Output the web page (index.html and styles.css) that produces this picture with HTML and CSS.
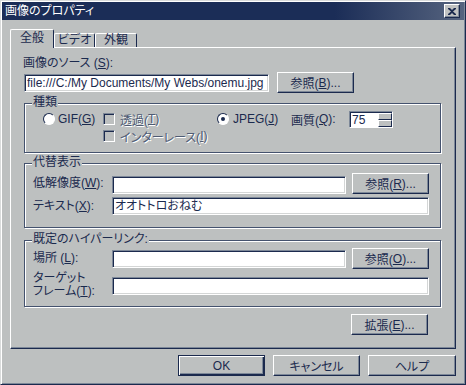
FILE: index.html
```html
<!DOCTYPE html>
<html>
  <head>
    <meta charset="utf-8">
    <link rel="stylesheet" href="styles.css">
  </head>
  <body>
    <div class="dialog">
      <div class="titlebar">
        <span class="title">画像のプロパティ</span>
        <span class="close">
          <svg width="8" height="7" viewBox="0 0 8 7">
            <path d="M0 0h2l2 2 2-2h2v1L5 3.5 8 6v1H6L4 5 2 7H0V6l3-2.5L0 1z" fill="#1b2a4e"/>
          </svg>
        </span>
      </div>

      <div class="tabs">
        <div class="tab active">全般</div>
        <div class="tab tab-video">ビデオ</div>
        <div class="tab tab-look">外観</div>
      </div>

      <div class="panel">
        <div class="lbl src-label">画像のソース (<u>S</u>):</div>
        <div class="src-row">
          <div class="field src-field">file:///C:/My Documents/My Webs/onemu.jpg</div>
          <div class="btn browse-b">参照(<u>B</u>)...</div>
        </div>

        <div class="group type-group">
          <span class="group-title">種類</span>
          <div class="type-row">
            <div class="opt col-gif"><span class="radio"></span>GIF(<u>G</u>)</div>
            <div class="opt col-trans disabled"><span class="check"></span>透過(<u>T</u>)</div>
            <div class="opt col-jpeg"><span class="radio on"></span>JPEG(<u>J</u>)</div>
            <div class="opt col-q">画質(<u>Q</u>):</div>
            <div class="spin">
              <div class="spin-val">75</div>
              <div class="spin-btns"><span></span><span></span></div>
            </div>
          </div>
          <div class="interlace-row">
            <div class="opt disabled"><span class="check"></span>インターレース(<u>I</u>)</div>
          </div>
        </div>

        <div class="group alt-group">
          <span class="group-title">代替表示</span>
          <div class="form-row first">
            <div class="lbl row-label lowres-label">低解像度(<u>W</u>):</div>
            <div class="field short-field"></div>
            <div class="btn side-btn">参照(<u>R</u>)...</div>
          </div>
          <div class="form-row text-row">
            <div class="lbl row-label text-label">テキスト(<u>X</u>):</div>
            <div class="field long-field jp-value">オオトトロおねむ</div>
          </div>
        </div>

        <div class="group link-group">
          <span class="group-title">既定のハイパーリンク:</span>
          <div class="form-row first">
            <div class="lbl row-label place-label">場所 (<u>L</u>):</div>
            <div class="field short-field"></div>
            <div class="btn side-btn">参照(<u>O</u>)...</div>
          </div>
          <div class="form-row target-row">
            <div class="lbl row-label target-label">ターゲット<br>フレーム(<u>T</u>):</div>
            <div class="field long-field"></div>
          </div>
        </div>

        <div class="btn extend-btn">拡張(<u>E</u>)...</div>
      </div>

      <div class="footer">
        <div class="btn default">OK</div>
        <div class="btn">キャンセル</div>
        <div class="btn">ヘルプ</div>
      </div>
    </div>
  </body>
</html>
```

FILE: styles.css
```css
* {
  box-sizing: border-box;
}

body {
  margin: 0;
  background-color: #bdc0c0;
  font-family: "Liberation Sans", "Noto Sans CJK JP", sans-serif;
  font-feature-settings: "palt";
  font-size: 12px;
  color: #1b2a4e;
}

u {
  text-underline-offset: 1px;
}

.dialog {
  width: 466px;
  height: 385px;
  padding: 1px;
  border: 1px solid;
  border-color: #d9dbdb #1b2a4e #1b2a4e #d9dbdb;
  box-shadow: inset 1px 1px #fff, inset -1px -1px #7d8898;
}

/* title bar */
.titlebar {
  height: 18px;
  display: flex;
  align-items: center;
  justify-content: space-between;
  padding: 0 4px 0 3px;
  background: linear-gradient(90deg, #1b2d57 72%, #56647f);
  color: #fff;
}

.title {
  font-size: 12px;
  line-height: 18px;
}

.close {
  width: 16px;
  height: 14px;
  display: flex;
  align-items: center;
  justify-content: center;
  background-color: #c0c2c2;
  border: 1px solid;
  border-color: #fff #1b2a4e #1b2a4e #fff;
  box-shadow: inset -1px -1px #7d8898;
}

/* tabs */
.tabs {
  display: flex;
  align-items: flex-end;
  height: 18px;
  margin: 9px 0 0 8px;
  position: relative;
  z-index: 1;
}

.tab {
  height: 14px;
  line-height: 13px;
  text-align: center;
  border: 1px solid;
  border-bottom: none;
  border-color: #fff #1b2a4e #1b2a4e #fff;
  border-radius: 2px 2px 0 0;
  background-color: #bdc0c0;
}

.tab.active {
  width: 44px;
  height: 19px;
  line-height: 17px;
  margin-bottom: -1px;
}

.tab-video {
  width: 41px;
}

.tab-look {
  width: 42px;
}

/* main panel */
.panel {
  width: 446px;
  height: 302px;
  margin-left: 8px;
  border: 1px solid;
  border-color: #fff #1b2a4e #1b2a4e #fff;
  box-shadow: inset -1px -1px #7d8898;
}

.lbl {
  white-space: nowrap;
}

.src-label {
  height: 14px;
  line-height: 14px;
  margin: 8px 0 0 12px;
}

.src-row {
  display: flex;
  align-items: center;
  height: 21px;
  margin: 2px 0 0 13px;
}

.field {
  height: 18px;
  padding-left: 2px;
  line-height: 17px;
  background-color: #fff;
  border: 1px solid;
  border-color: #7d8898 #fff #fff #7d8898;
  box-shadow: inset 1px 1px #1b2a4e, inset -1px -1px #d4d6d6;
  white-space: nowrap;
  overflow: hidden;
}

.src-field {
  width: 245px;
}

.btn {
  height: 21px;
  display: flex;
  align-items: center;
  justify-content: center;
  background-color: #bdc0c0;
  border: 1px solid;
  border-color: #fff #1b2a4e #1b2a4e #fff;
  box-shadow: inset -1px -1px #7d8898;
  white-space: nowrap;
}

.browse-b {
  width: 77px;
  margin-left: 8px;
}

/* group boxes */
.group {
  position: relative;
  width: 417px;
  margin-left: 13px;
  border: 1px solid #44526e;
  box-shadow: 1px 1px 0 #fff, inset 1px 1px 0 #fff;
}

.group-title {
  position: absolute;
  top: -9px;
  left: 7px;
  padding: 0 1px;
  line-height: 14px;
  background-color: #bdc0c0;
}

.type-group {
  height: 50px;
  margin-top: 10px;
  padding: 6px 0 0 18px;
}

.type-row {
  display: flex;
  align-items: center;
  height: 18px;
}

.interlace-row {
  display: flex;
  height: 14px;
  margin: 1px 0 0 60px;
}

.opt {
  display: flex;
  align-items: center;
  white-space: nowrap;
}

.col-gif {
  width: 60px;
}

.col-trans {
  width: 114px;
}

.col-jpeg {
  width: 74px;
}

.col-q {
  width: 58px;
}

.radio {
  width: 12px;
  height: 12px;
  margin-right: 3px;
  border: 1px solid;
  border-color: #1b2a4e #fff #fff #1b2a4e;
  border-radius: 50%;
  background-color: #fff;
  display: flex;
  align-items: center;
  justify-content: center;
}

.col-jpeg .radio {
  margin-right: 4px;
}

.radio.on::after {
  content: "";
  width: 4px;
  height: 4px;
  border-radius: 50%;
  background-color: #1b2a4e;
}

.check {
  width: 12px;
  height: 12px;
  margin-right: 5px;
  border: 1px solid;
  border-color: #7d8898 #fff #fff #7d8898;
  box-shadow: inset 1px 1px #1b2a4e;
  background-color: #bdc0c0;
}

.disabled {
  color: #4e5b74;
  text-shadow: 1px 1px 0 #fff;
}

.spin {
  display: flex;
  width: 44px;
  height: 17px;
  border: 1px solid;
  border-color: #7d8898 #fff #fff #7d8898;
  box-shadow: inset 1px 1px #1b2a4e;
  background-color: #fff;
}

.spin-val {
  flex: 1;
  padding: 1px 0 0 2px;
  line-height: 14px;
}

.spin-btns {
  width: 14px;
  display: flex;
  flex-direction: column;
  margin: 1px 0 0 0;
}

.spin-btns span {
  flex: 1;
  background-color: #bdc0c0;
  border: 1px solid;
  border-color: #fff #1b2a4e #1b2a4e #fff;
}

.alt-group {
  height: 65px;
  margin-top: 10px;
  padding: 9px 0 0 8px;
}

.link-group {
  height: 67px;
  margin-top: 12px;
  padding: 7px 0 0 8px;
}

.form-row {
  display: flex;
  align-items: flex-start;
}

.row-label {
  width: 79px;
  line-height: 14px;
}

.lowres-label,
.place-label {
  margin-top: 3px;
}

.short-field {
  width: 234px;
  margin: 3px 6px 0 0;
}

.link-group .short-field {
  margin-top: 2px;
}

.side-btn {
  width: 77px;
}

.text-row {
  margin-top: 3px;
}

.text-label {
  line-height: 18px;
}

.long-field {
  width: 317px;
}

.jp-value {
  font-size: 12px;
}

.target-row {
  margin-top: 3px;
}

.target-label {
  line-height: 13px;
}

.target-row .long-field {
  margin-top: 5px;
}

.extend-btn {
  width: 77px;
  margin: 7px 0 0 340px;
}

/* bottom buttons */
.footer {
  display: flex;
  justify-content: flex-end;
  gap: 8px;
  width: 446px;
  margin: 6px 0 0 8px;
}

.footer .btn {
  width: 87px;
}

.footer .btn:last-child {
  width: 88px;
}

.btn.default {
  border-color: #1b2a4e;
  box-shadow: inset 1px 1px #fff, inset -1px -1px #1b2a4e, inset -2px -2px #7d8898;
}
```
